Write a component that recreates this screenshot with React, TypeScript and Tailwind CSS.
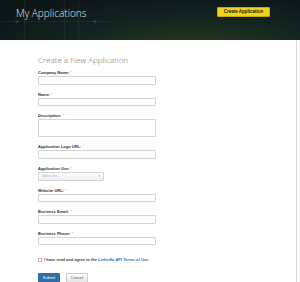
import React from "react";

const fields = [
  { label: "Company Name:", kind: "input" },
  { label: "Name:", kind: "input" },
  { label: "Description:", kind: "textarea" },
  { label: "Application Logo URL:", kind: "input" },
  { label: "Application Use:", kind: "select" },
  { label: "Website URL:", kind: "input" },
  { label: "Business Email:", kind: "input" },
  { label: "Business Phone:", kind: "input" },
];

function Field({ label, kind }: { label: string; kind: string }) {
  return (
    <div className="mb-[7px] flex flex-col">
      <label className="mb-[1px] h-[5px] text-[4px] leading-[5px] font-bold text-[#333]">
        {label}
        <span className="font-normal text-[#999]"> *</span>
      </label>
      {kind === "input" && (
        <div className="h-[8.5px] w-[118px] rounded-[1px] border border-[#d4d4d4] bg-white" />
      )}
      {kind === "textarea" && (
        <div className="h-[18px] w-[118px] rounded-[1px] border border-[#d4d4d4] bg-white" />
      )}
      {kind === "select" && (
        <div className="flex h-[9px] w-[66px] items-center justify-between rounded-[1px] border border-[#d4d4d4] bg-gradient-to-b from-white to-[#eee] px-[3px]">
          <span className="text-[3px] text-[#aaa]">Select One...</span>
          <span className="text-[4px] leading-none text-[#444]">↕</span>
        </div>
      )}
    </div>
  );
}

export default function App() {
  return (
    <div className="h-[282px] w-[300px] overflow-hidden bg-white font-['Liberation_Sans',Arial,sans-serif]">
      <header className="relative flex h-[40px] items-start justify-between bg-[radial-gradient(ellipse_at_65%_120%,#2b3a1c_0%,#122420_45%,#0d1718_80%)] pl-[16px] pr-[30px] pt-[7px]">
        <svg className="pointer-events-none absolute inset-0" width="300" height="40">
          <g stroke="rgba(255,255,255,0.05)" strokeWidth="1">
            <line x1="24.5" y1="0" x2="24.5" y2="40" />
            <line x1="64.5" y1="0" x2="64.5" y2="40" />
            <line x1="78.5" y1="0" x2="78.5" y2="40" />
            <line x1="0" y1="21.5" x2="110" y2="21.5" />
          </g>
          <g stroke="rgba(255,255,255,0.2)" strokeWidth="0.6">
            <line x1="15" y1="21.5" x2="19" y2="21.5" />
            <line x1="17" y1="19.5" x2="17" y2="23.5" />
            <line x1="93" y1="21.5" x2="97" y2="21.5" />
            <line x1="95" y1="19.5" x2="95" y2="23.5" />
          </g>
        </svg>
        <h1 className="relative font-['Open_Sans',sans-serif] text-[10px] leading-[12px] font-light text-[#e8e8e8]">
          My Applications
        </h1>
        <button className="relative h-[10px] w-[53px] rounded-[1px] border border-[#c9a800] bg-[#f3d21b] text-[4.5px] leading-none font-bold text-[#222]">
          Create Application
        </button>
      </header>
      <main className="h-[242px] w-[297px] border-r border-[#dcdcdc] pl-[38px] pt-[15px]">
        <h2 className="mb-[5px] h-[10px] font-['Open_Sans',sans-serif] text-[8px] leading-[10px] font-light text-[#777]">
          Create a New Application
        </h2>
        {fields.map((f) => (
          <Field key={f.label} label={f.label} kind={f.kind} />
        ))}
        <div className="mt-[12px] flex items-center gap-[2px]">
          <div className="h-[4px] w-[4px] border border-[#bbb] bg-white" />
          <span className="text-[4px] font-bold text-[#444]">
            I have read and agree to the{" "}
            <span className="text-[#2a7ab0]">LinkedIn API Terms of Use.</span>
          </span>
        </div>
        <div className="mt-[10px] flex gap-[6px]">
          <button className="h-[10px] w-[22px] rounded-[1px] bg-[#2a6fa8] text-[4px] text-white">
            Submit
          </button>
          <button className="h-[10px] w-[22px] rounded-[1px] border border-[#ccc] bg-gradient-to-b from-white to-[#e6e6e6] text-[4px] text-[#555]">
            Cancel
          </button>
        </div>
      </main>
    </div>
  );
}
